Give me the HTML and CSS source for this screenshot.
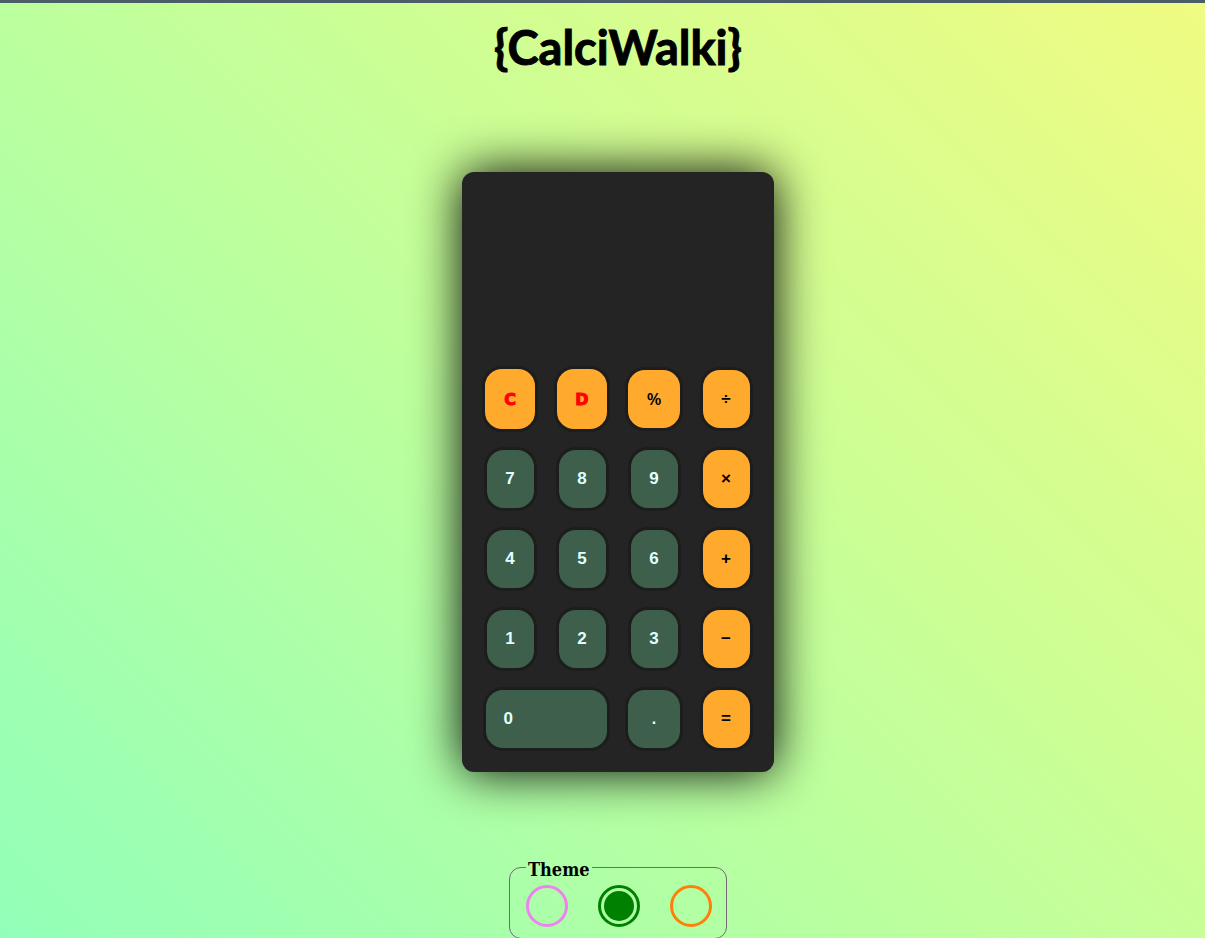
FILE: index.html
```
<!DOCTYPE html>
<html lang="en">
<head>
<meta charset="utf-8">
<title>CalciWalki</title>
<link rel="stylesheet" href="styles.css">
</head>
<body class="page">
<h1 class="title">{CalciWalki}</h1>
<main class="calculator">
  <output class="display" aria-label="Result"></output>
  <div class="keys">
    <button type="button" class="key key-clear">C</button>
    <button type="button" class="key key-clear">D</button>
    <button type="button" class="key key-operator key-percent">%</button>
    <button type="button" class="key key-operator">÷</button>
    <button type="button" class="key">7</button>
    <button type="button" class="key">8</button>
    <button type="button" class="key">9</button>
    <button type="button" class="key key-operator">×</button>
    <button type="button" class="key">4</button>
    <button type="button" class="key">5</button>
    <button type="button" class="key">6</button>
    <button type="button" class="key key-operator">+</button>
    <button type="button" class="key">1</button>
    <button type="button" class="key">2</button>
    <button type="button" class="key">3</button>
    <button type="button" class="key key-operator">−</button>
    <button type="button" class="key key-zero">0</button>
    <button type="button" class="key key-dot">.</button>
    <button type="button" class="key key-operator">=</button>
  </div>
</main>
<fieldset class="themes">
  <legend class="themes-title">Theme</legend>
  <div class="themes-options">
    <input type="radio" name="theme" class="theme theme-violet" aria-label="Violet">
    <input type="radio" name="theme" class="theme theme-green" aria-label="Green" checked>
    <input type="radio" name="theme" class="theme theme-orange" aria-label="Orange">
  </div>
</fieldset>
</body>
</html>
```
FILE: styles.css
```
* {
  box-sizing: border-box;
}

.page {
  margin: 0;
  min-height: 100vh;
  padding-left: 31px;
  display: flex;
  flex-direction: column;
  align-items: center;
  border-top: 3px solid #4b5d66;
  background: linear-gradient(45deg, #92ffb9, #c2ff9a 50%, #f0fb82);
  font-family: "Liberation Sans", Arial, sans-serif;
}

.title {
  margin: 16px 0 96px;
  font-family: "Comic Sans MS", Lato, sans-serif;
  font-size: 47px;
  line-height: 57px;
  font-weight: 700;
  color: #000;
  -webkit-text-stroke: 1px #000;
}

.calculator {
  width: 312px;
  padding: 12px 12px 13px;
  border-radius: 12px;
  background: #242424;
  box-shadow: 0 0 50px #000;
}

.display {
  display: block;
  height: 175px;
  color: #fff;
}

.keys {
  display: grid;
  grid-template-columns: repeat(4, 1fr);
  grid-auto-rows: 80px;
  place-items: center;
}

.key {
  min-width: 53px;
  height: 64px;
  padding: 0 18px;
  border: 3px solid #1d1d1d;
  border-radius: 20px;
  background: #3e5f4b;
  color: #e0ffff;
  font-family: "Liberation Sans", Arial, sans-serif;
  font-size: 17px;
  font-weight: 700;
}

.key-operator,
.key-clear {
  background: #ffa92d;
  color: #000;
}

.key-clear {
  width: 56px;
  height: 66px;
  color: #f00;
  font-family: "Arial Black", "DejaVu Sans", sans-serif;
  font-size: 16px;
  font-weight: 900;
  -webkit-text-stroke: 1px #f00;
}

.key-percent {
  width: 58px;
  padding: 0 0 2px;
  font-family: "Open Sans", "Noto Sans", sans-serif;
  font-size: 17px;
  font-weight: 600;
}

.key-dot {
  width: 58px;
  font-size: 16px;
}

.key-zero {
  grid-column: span 2;
  width: 127px;
  text-align: left;
}

.themes {
  margin: 82px 0 0;
  padding: 0 14px 11px 16px;
  border: 1px solid #77667c;
  border-radius: 12px;
}

.themes-title {
  padding: 6px 2px 0;
  font-family: "DejaVu Serif Condensed", "DejaVu Serif", serif;
  font-size: 18px;
  line-height: 20px;
  font-weight: 700;
}

.themes-options {
  display: flex;
  gap: 30px;
  padding-top: 5px;
}

.theme {
  appearance: none;
  width: 42px;
  height: 42px;
  margin: 0;
  padding: 3px;
  border: 3px solid currentColor;
  border-radius: 50%;
  background-clip: content-box;
}

.theme:checked {
  background-color: currentColor;
}

.theme-violet {
  color: violet;
}

.theme-green {
  color: green;
}

.theme-orange {
  color: #ff7f0a;
}
```
